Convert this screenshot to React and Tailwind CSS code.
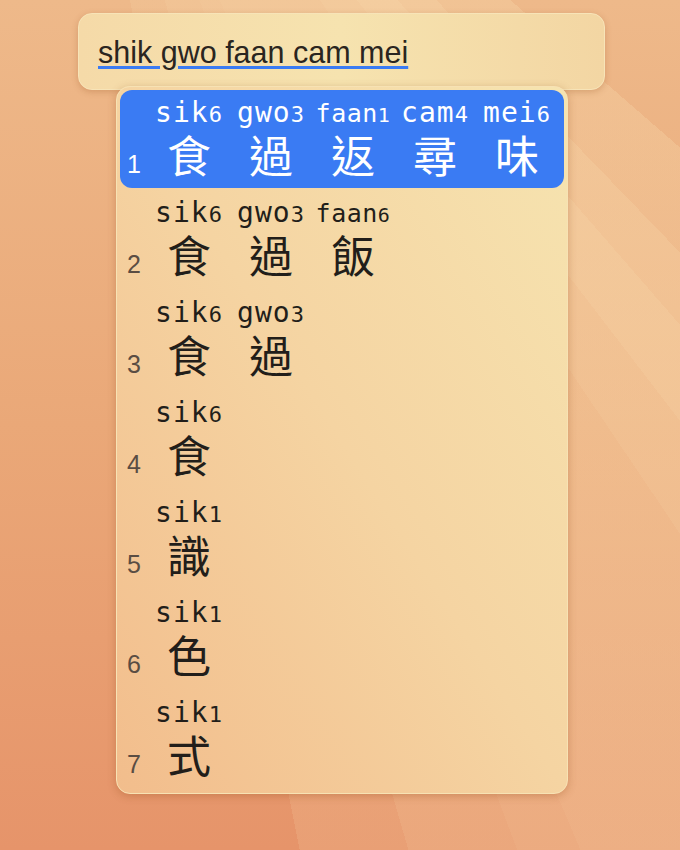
import React from "react";

const rows = [
  { syl: [["sik", "6"], ["gwo", "3"], ["faan", "1"], ["cam", "4"], ["mei", "6"]], chars: ["食", "過", "返", "尋", "味"] },
  { syl: [["sik", "6"], ["gwo", "3"], ["faan", "6"]], chars: ["食", "過", "飯"] },
  { syl: [["sik", "6"], ["gwo", "3"]], chars: ["食", "過"] },
  { syl: [["sik", "6"]], chars: ["食"] },
  { syl: [["sik", "1"]], chars: ["識"] },
  { syl: [["sik", "1"]], chars: ["色"] },
  { syl: [["sik", "1"]], chars: ["式"] },
];

function Row({ row, index, active }) {
  return (
    <div
      className={
        "h-[98px] pt-[7px] flex flex-col " +
        (active ? "bg-[#3a7bf3] rounded-[12px] text-white" : "text-[#221e1a]")
      }
    >
      <div className="flex items-baseline pl-[28px] h-[32px] font-['DejaVu_Sans_Mono',monospace]">
        {row.syl.map(([s, d], i) => (
          <div
            key={i}
            className={
              "w-[82px] text-center leading-[32px] whitespace-nowrap " +
              (s === "faan" ? "text-[25px] tracking-[0.5px]" : "text-[28px] tracking-[1px]")
            }
          >
            {s}
            <span className={"leading-none " + (s === "faan" ? "text-[20px]" : "text-[22px]")}>{d}</span>
          </div>
        ))}
      </div>
      <div className="flex items-baseline mt-[3px]">
        <div
          className={
            "w-[28px] text-center text-[25px] leading-none font-['Liberation_Sans',sans-serif] " +
            (active ? "text-white" : "text-[#5a4d43]")
          }
        >
          {index + 1}
        </div>
        {row.chars.map((c, i) => (
          <div
            key={i}
            className="w-[82px] text-center text-[44px] leading-[44px] font-['Noto_Sans_CJK_TC','Noto_Sans_CJK_SC',sans-serif]"
          >
            {c}
          </div>
        ))}
      </div>
    </div>
  );
}

export default function App() {
  return (
    <div className="w-[680px] h-[850px] overflow-hidden bg-linear-to-b from-[#eeb98a] via-[#eaa878] to-[#e6946a]">
      <div className="w-full h-full bg-[conic-gradient(from_0deg_at_50px_-400px,rgba(250,225,180,0)_131deg,rgba(250,225,180,0.25)_131deg,rgba(250,225,180,0.25)_136deg,rgba(250,225,180,0.4)_136deg,rgba(250,225,180,0.4)_139deg,rgba(250,225,180,0.5)_139deg,rgba(250,225,180,0.5)_142.5deg,rgba(250,225,180,0.42)_142.5deg,rgba(250,225,180,0.42)_146deg,rgba(250,225,180,0.35)_146deg,rgba(250,225,180,0.35)_157deg,rgba(250,225,180,0.3)_157deg,rgba(250,225,180,0.3)_159.5deg,rgba(250,225,180,0.25)_159.5deg,rgba(250,225,180,0.25)_164deg,rgba(250,225,180,0.15)_164deg,rgba(250,225,180,0.15)_168.7deg,rgba(250,225,180,0)_168.7deg)] pt-[13px] pl-[78px]">
        <div className="w-[527px] h-[77px] rounded-[14px] border border-[#f7e4b8] bg-linear-to-r from-[#f5daa8] via-[#f6e3af] to-[#f3d6a3] shadow-[0_2px_6px_rgba(140,70,20,0.25)] pl-[19px] pt-[21px]">
          <span className="text-[30.5px] leading-[34px] text-[#2a2520] font-['Liberation_Sans',sans-serif] underline decoration-[#3a7bf3] decoration-[3px] underline-offset-[3px]">
            shik gwo faan cam mei
          </span>
        </div>
        <div className="relative z-10 ml-[38px] -mt-[4px] w-[452px] rounded-[14px] border border-[#f7e2b4] bg-linear-to-tr from-[#f2bd8c] via-[#f5d4a2] to-[#f6e4b0] shadow-[0_2px_8px_rgba(140,70,20,0.3)] px-[3px] pt-[3px] pb-[5px] flex flex-col gap-[2px]">
          {rows.map((r, i) => (
            <Row key={i} row={r} index={i} active={i === 0} />
          ))}
        </div>
      </div>
    </div>
  );
}
